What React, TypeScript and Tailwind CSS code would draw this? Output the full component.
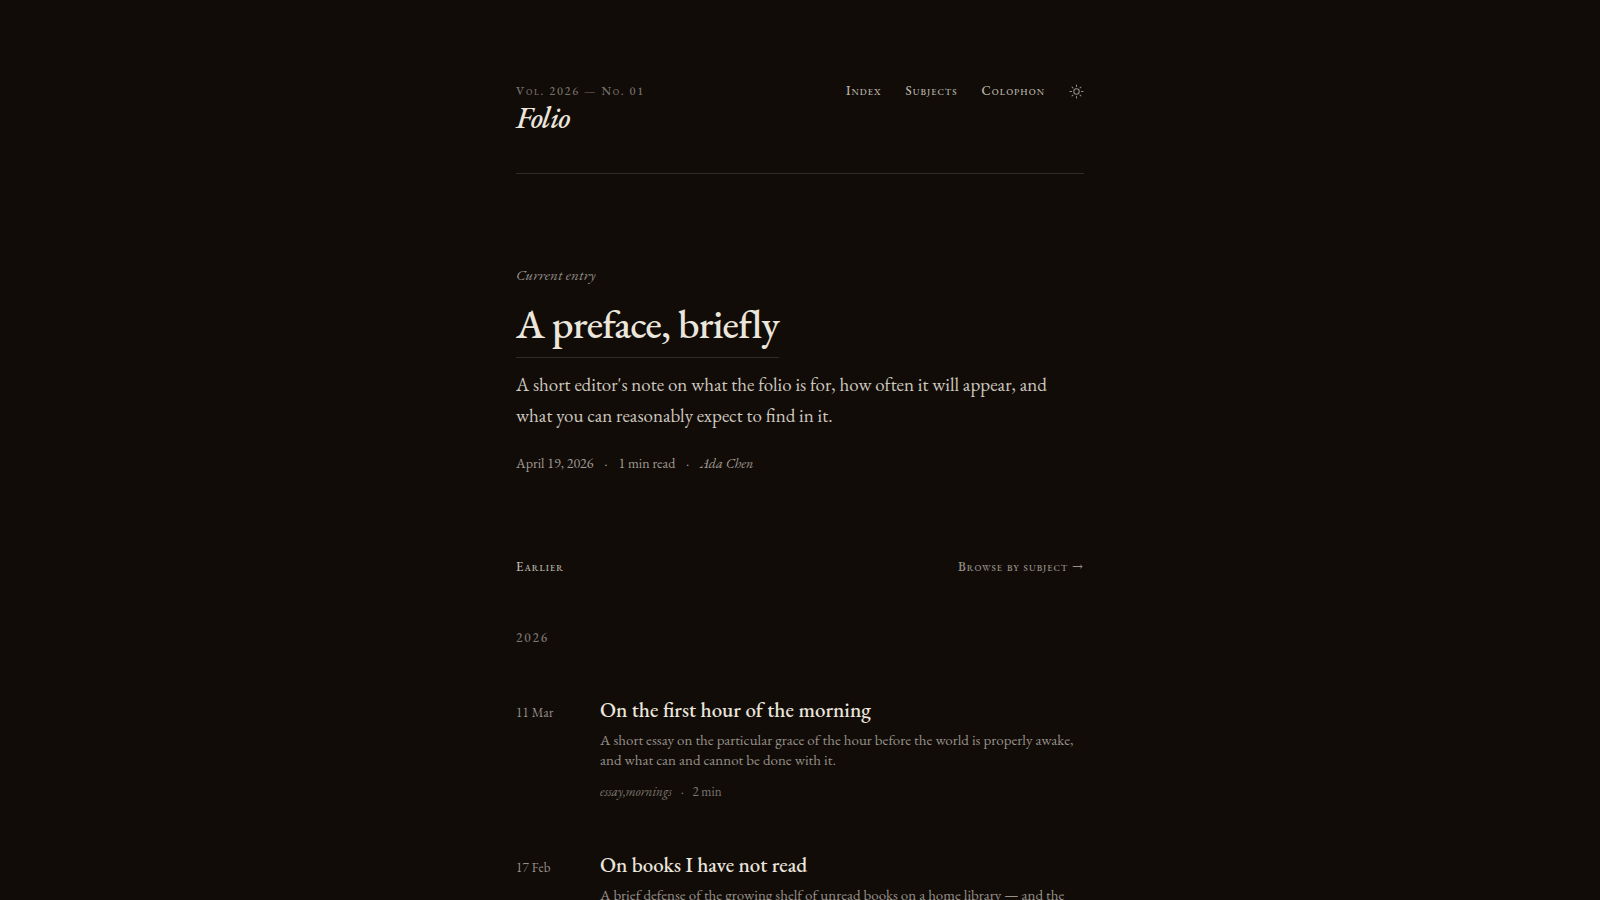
import React from "react";

const navLinks = ["Index", "Subjects", "Colophon"];

const entries = [
  {
    date: "11 Mar",
    title: "On the first hour of the morning",
    summary:
      "A short essay on the particular grace of the hour before the world is properly awake, and what can and cannot be done with it.",
    tags: "essay,mornings",
    length: "2 min",
  },
  {
    date: "17 Feb",
    title: "On books I have not read",
    summary:
      "A brief defense of the growing shelf of unread books on a home library — and the",
    tags: "",
    length: "",
  },
];

const SunIcon = () => (
  <svg
    className="size-[15px]"
    viewBox="0 0 16 16"
    fill="none"
    stroke="currentColor"
    strokeWidth="1.1"
    strokeLinecap="round"
    aria-hidden="true"
  >
    <circle cx="8" cy="8" r="2.9" />
    <path d="M8 1v1.7M8 13.3v1.7M1 8h1.7M13.3 8h1.7M3.2 3.2l1 1M11.8 11.8l1 1M3.2 12.8l1-1M11.8 4.2l1-1" />
  </svg>
);

// Scaled capitals that keep the lining figures
const SmallCaps = ({ text }: { text: string }) => (
  <>
    {text.split(/([a-z]+)/).map((part, i) =>
      i % 2 ? (
        <span key={i} className="text-[0.7em] leading-none uppercase">
          {part}
        </span>
      ) : (
        part
      ),
    )}
  </>
);

const App = () => {
  return (
    <div className="min-h-screen bg-[#110c08] font-['EB_Garamond','Liberation_Serif',serif] text-[#ebe5dc]">
      <div className="max-w-[616px] mx-auto px-6 pt-20">
        {/* Masthead */}
        <header className="flex items-start justify-between border-b border-[#2f2b27] pb-[39px]">
          <div>
            <p className="text-[12px] leading-[22px] font-medium tracking-[0.14em] text-[#757069]">
              <SmallCaps text="Vol. 2026 — No. 01" />
            </p>
            <a href="#" className="block text-[30px] leading-8 font-medium italic tracking-[-0.02em]">
              Folio
            </a>
          </div>
          <nav className="flex items-center gap-6 text-[13px] leading-[22px] font-medium tracking-[0.08em] text-[#b8b2a9]">
            {navLinks.map((link) => (
              <a key={link} href="#">
                <SmallCaps text={link} />
              </a>
            ))}
            <button type="button" aria-label="Toggle theme" className="text-[#969088]">
              <SunIcon />
            </button>
          </nav>
        </header>

        <main>
          {/* Current entry */}
          <section className="pt-[89px]">
            <p className="text-[15px] leading-6 italic tracking-[0.01em] text-[#969088]">
              Current entry
            </p>
            <h1 className="mt-[13px] text-[41px] leading-[48px] font-medium tracking-[-0.02em]">
              <a href="#" className="inline-block border-b border-[#2f2b27] pb-[9px]">
                A preface, briefly
              </a>
            </h1>
            <p className="mt-[11px] text-[19px] leading-[31px] text-[#cdc7be]">
              A short editor's note on what the folio is for, how often it will
              appear, and what you can reasonably expect to find in it.
            </p>
            <p className="mt-5 flex gap-[11px] text-[14px] leading-6 text-[#a09a92]">
              <span>April 19, 2026</span>
              <span>·</span>
              <span>1 min read</span>
              <span>·</span>
              <span className="italic">Ada Chen</span>
            </p>
          </section>

          {/* Archive */}
          <section className="pt-20">
            <div className="flex items-baseline justify-between text-[13px] leading-6 font-medium tracking-[0.08em]">
              <h2 className="text-[#b8b2a9]">
                <SmallCaps text="Earlier" />
              </h2>
              <a href="#" className="text-[#969088]">
                <SmallCaps text="Browse by subject " />
                <span className="font-['DejaVu_Serif',serif] leading-none">→</span>
              </a>
            </div>
            <h3 className="mt-[47px] text-[13px] leading-6 font-medium tracking-[0.14em] text-[#7d7770]">
              2026
            </h3>
            <ul className="mt-[46px]">
              {entries.map((entry) => (
                <li key={entry.title} className="flex items-baseline gap-6 pb-[47px]">
                  <time className="w-[60px] shrink-0 text-[13px] leading-6 tracking-[0.02em] text-[#969088]">
                    {entry.date}
                  </time>
                  <article>
                    <h4 className="text-[21px] leading-7 font-medium">
                      <a href="#">{entry.title}</a>
                    </h4>
                    <p className="mt-[6px] text-[15px] leading-5 text-[#969088]">
                      {entry.summary}
                    </p>
                    {entry.tags && (
                      <p className="mt-[10px] flex gap-[9px] text-[13px] leading-6 text-[#7d7770]">
                        <span className="italic">{entry.tags}</span>
                        <span>·</span>
                        <span>{entry.length}</span>
                      </p>
                    )}
                  </article>
                </li>
              ))}
            </ul>
          </section>
        </main>
      </div>
    </div>
  );
};

export default App;
